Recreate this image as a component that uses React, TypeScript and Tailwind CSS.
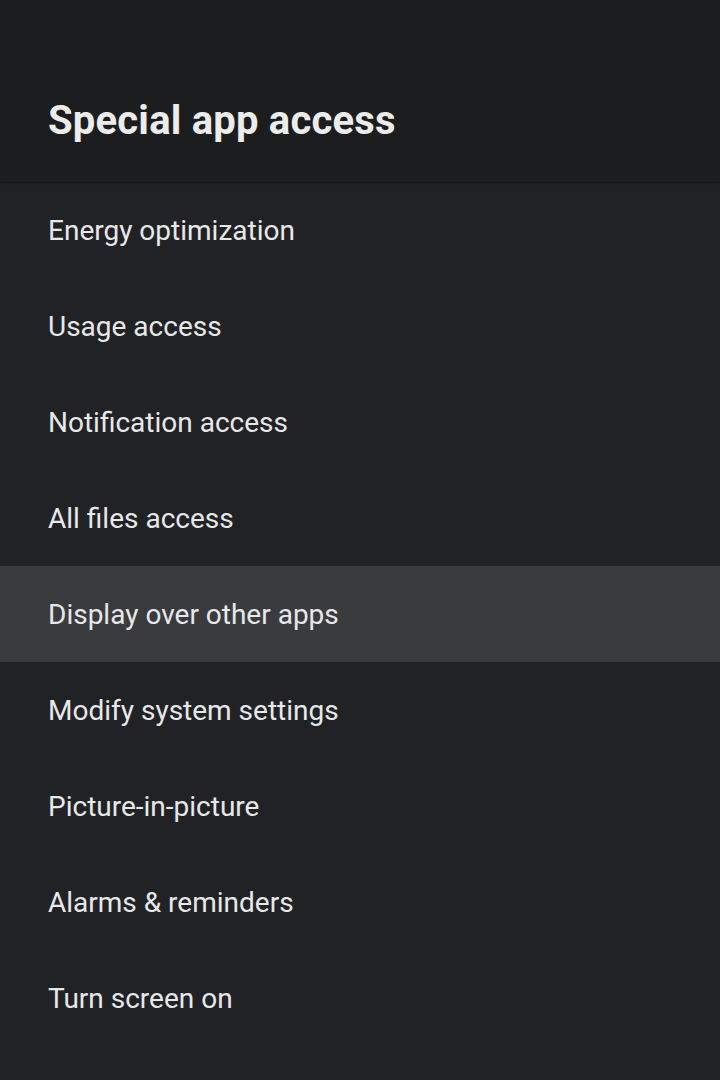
const items = [
  'Energy optimization',
  'Usage access',
  'Notification access',
  'All files access',
  'Display over other apps',
  'Modify system settings',
  'Picture-in-picture',
  'Alarms & reminders',
  'Turn screen on',
];

const SELECTED = 4;

export default function App() {
  return (
    <div className="w-[720px] h-[1080px] overflow-hidden bg-[#212226] font-['Roboto',sans-serif] antialiased">
      {/* Header */}
      <div className="h-[182px] bg-[#1c1d1f] px-12 pt-[96px] shadow-[0_1px_2px_rgba(0,0,0,0.45)] relative z-10">
        <h1 className="text-[40px] font-bold leading-[50px] tracking-[0.2px] text-[#ececec]">Special app access</h1>
      </div>

      {/* List */}
      <div className="flex flex-col">
        {items.map((label, i) => (
          <div
            key={label}
            className={`h-[96px] flex items-center px-12 pt-[2px] ${i === SELECTED ? 'bg-[#3a3b3f]' : ''}`}
          >
            <span className="text-[28px] text-[#e8e8e8] leading-none">{label}</span>
          </div>
        ))}
      </div>
    </div>
  );
}
